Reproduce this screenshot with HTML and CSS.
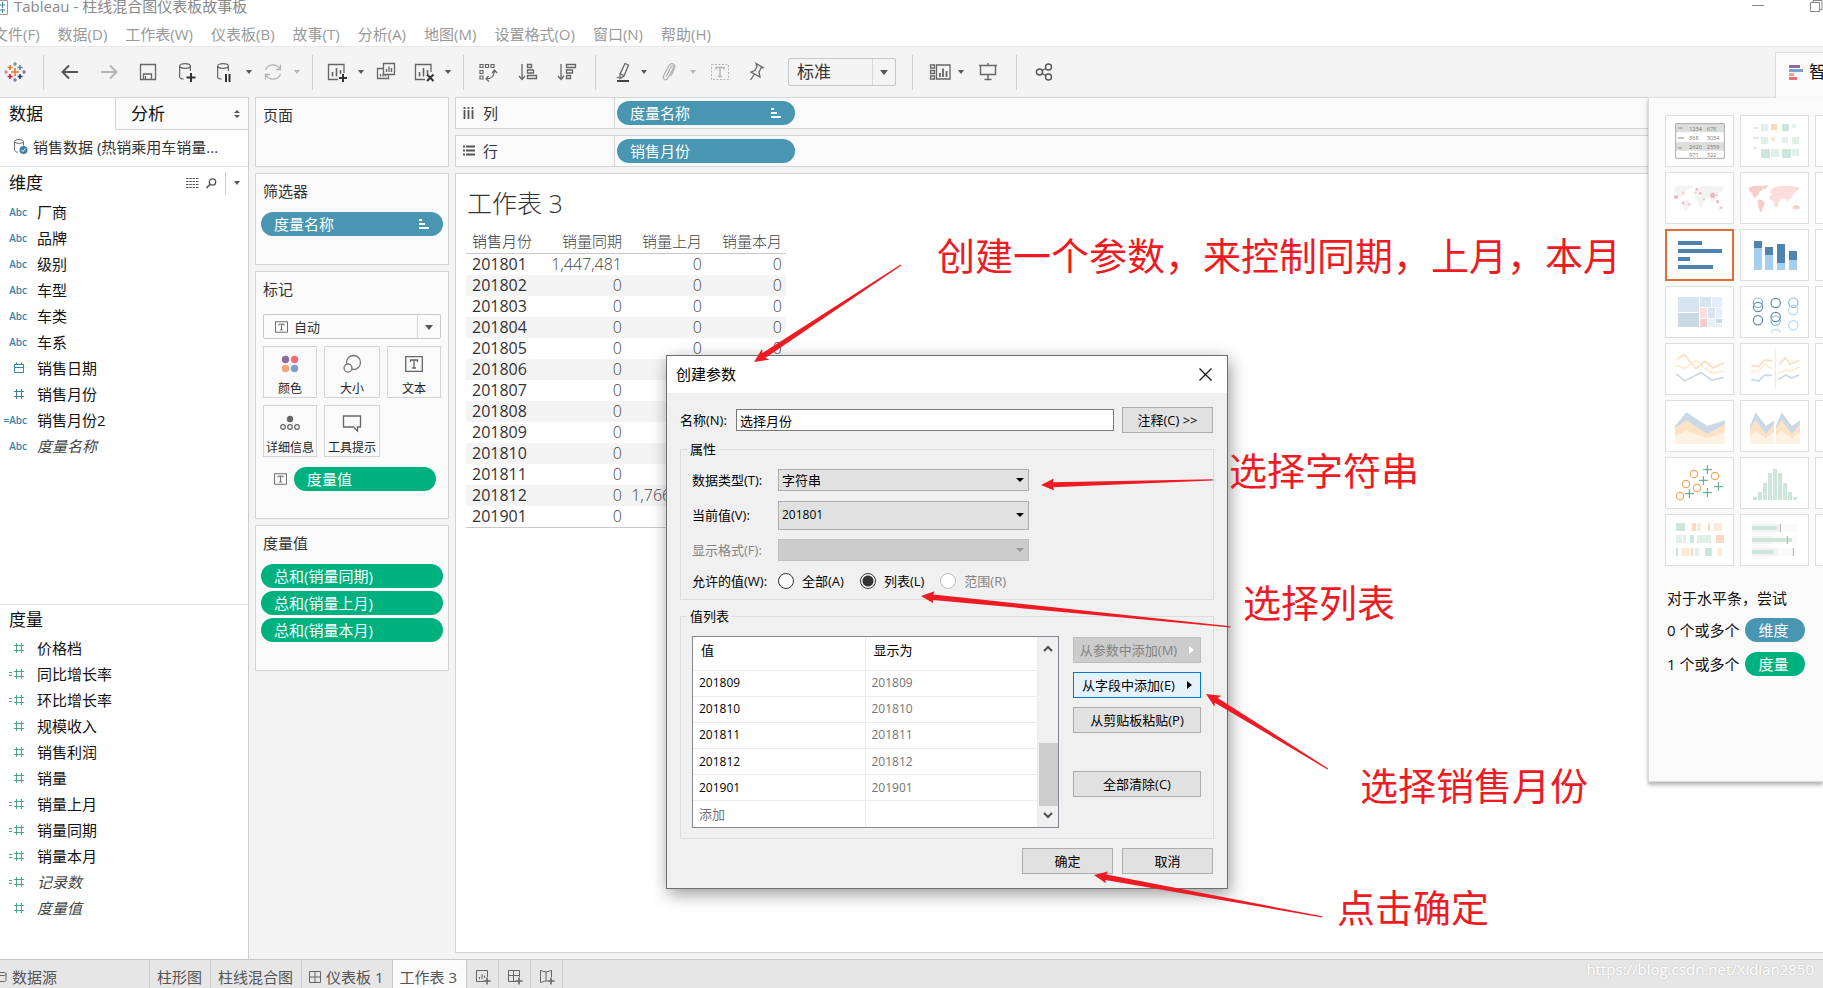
FILE: index.html
```html
<!DOCTYPE html>
<html lang="zh-CN">
<head>
<meta charset="utf-8">
<title>Tableau - 柱线混合图仪表板故事板</title>
<link rel="stylesheet" href="styles.css">
</head>
<body>
<svg class="defs" width="0" height="0" aria-hidden="true">
  <symbol id="hash" viewBox="0 0 12 12"><path d="M1 3.500h10M1 8.500h10M3.500 1v10M8.500 1v10" fill="none" stroke="currentColor"/></symbol>
  <symbol id="eqhash" viewBox="0 0 16 12"><path d="M0 4.500h3M0 7.500h3M5 3.500h10M5 8.500h10M7.500 1v10M12.500 1v10" fill="none" stroke="currentColor"/></symbol>
  <symbol id="cal" viewBox="0 0 12 12"><path d="M1.500 2.500h9v8h-9zM1.500 5.500h9M3.500 .5v2M8.500 .5v2" fill="none" stroke="currentColor"/></symbol>
  <symbol id="tbox" viewBox="0 0 18 16"><path d="M.7.7h16.600v14.600H.7zM5.500 6V4h7v2M9 4v8M7 12h4" fill="none" stroke="#666" stroke-width="1.300"/></symbol>
  <symbol id="sorted" viewBox="0 0 10 10"><path d="M0 0h3v2H0zM0 4h6v2H0zM0 8h10v2H0z" fill="#fff"/></symbol>
  <symbol id="cyl" viewBox="0 0 12 17"><path d="M.6 3v10.500c0 1.500 2 2.500 4 2.500M11.400 3v5" fill="none" stroke="currentColor" stroke-width="1.200"/><ellipse cx="6" cy="3" rx="5.400" ry="2.300" fill="none" stroke="currentColor" stroke-width="1.200"/></symbol>
</svg>

<header class="titlebar">
  <svg class="app-icon" viewBox="0 0 12 20"><path d="M0 .5h7.500v14H0" fill="#fff" stroke="#999"/><path d="M0 5h5M2.500 2v6M0 10h5M2.500 9v4" stroke="#3b82a8"/></svg>
  <span class="title-text">Tableau - 柱线混合图仪表板故事板</span>
  <svg class="win-btns" viewBox="0 0 72 14"><path d="M1 5.500h12M59.500 2.500h9v9h-9zM62 2.500v-2h9v9h-2" fill="none" stroke="#888"/></svg>
</header>
<nav class="menubar">
  <a href="#">文件(F)</a><a href="#">数据(D)</a><a href="#">工作表(W)</a><a href="#">仪表板(B)</a><a href="#">故事(T)</a><a href="#">分析(A)</a><a href="#">地图(M)</a><a href="#">设置格式(O)</a><a href="#">窗口(N)</a><a href="#">帮助(H)</a>
</nav>

<div class="toolbar">
  <button class="tb" aria-label="开始"><svg viewBox="0 0 24 24" fill="none" stroke-width="1.600"><path d="M12 8v8M8 12h8" stroke="#e8762c"/><path d="M7 5v5M4.500 7.500h5" stroke="#e8762c"/><path d="M17 5v5M14.500 7.500h5" stroke="#5b879b"/><path d="M7 14v5M4.500 16.500h5" stroke="#c72037"/><path d="M17 14v5M14.500 16.500h5" stroke="#1f447e"/><path d="M12 2v4M10 4h4" stroke="#5b879b" stroke-width="1.200"/><path d="M12 18v4M10 20h4M19 12h4M21 10v4" stroke="#6d6a9c" stroke-width="1.200"/><path d="M1 12h4M3 10v4" stroke="#c77" stroke-width="1.200"/></svg></button>
  <i class="sep m16"></i>
  <button class="tb m14" aria-label="撤消"><svg viewBox="0 0 24 24"><path d="M20 12H5M11 5.500L4.500 12l6.500 6.500" fill="none" stroke="#555" stroke-width="2"/></svg></button>
  <button class="tb m15" aria-label="重做"><svg viewBox="0 0 24 24"><path d="M4 12h15M13 5.500l6.500 6.500-6.500 6.500" fill="none" stroke="#b4b4b4" stroke-width="2"/></svg></button>
  <button class="tb m15" aria-label="保存"><svg viewBox="0 0 24 24"><path d="M4.500 4.500h15v15h-15zM7.500 19v-5h8v5M9.500 16v3" fill="none" stroke="#666" stroke-width="1.300"/></svg></button>
  <button class="tb m15" aria-label="新建数据源"><svg viewBox="0 0 24 24" color="#666"><use href="#cyl" x="4" y="3" width="12" height="17"/><path d="M16 13v9M11.500 17.500h9" stroke="#333" stroke-width="2"/></svg></button>
  <button class="tb m14" aria-label="暂停"><svg viewBox="0 0 24 24" color="#666"><use href="#cyl" x="4" y="3" width="12" height="17"/><path d="M13 14v8M16.500 14v8" stroke="#333" stroke-width="2"/></svg></button>
  <i class="caret m7"></i>
  <button class="tb m7" aria-label="刷新"><svg viewBox="0 0 24 24"><path d="M4.500 10A8 8 0 0 1 19 9M19.500 14A8 8 0 0 1 5 15M19.500 4.500V9.500H15M4.500 19.500V14.500H9" fill="none" stroke="#b4b4b4" stroke-width="1.300"/></svg></button>
  <i class="caret dim m7"></i>
  <i class="sep m10"></i>
  <button class="tb m12" aria-label="新建工作表"><svg viewBox="0 0 24 24"><path d="M13 19.500H3.500v-15h15.500V13" fill="none" stroke="#666" stroke-width="1.300"/><path d="M7.500 12v4.500M11.500 8v8.500M15.500 10v4" stroke="#666" stroke-width="1.600"/><path d="M18 14v8M14 18h8" stroke="#333" stroke-width="2"/></svg></button>
  <i class="caret m7"></i>
  <button class="tb m8" aria-label="复制"><svg viewBox="0 0 24 24"><path d="M9.500 3.500h11v11h-11zM9 8.500H3.500v10h11v-4M12.500 9v3M15 6.500v5.500M17.500 8v4M6.500 14v2.500M9 14v2.500M11.500 15v1.500" fill="none" stroke="#666" stroke-width="1.300"/></svg></button>
  <button class="tb m14" aria-label="清除"><svg viewBox="0 0 24 24"><path d="M13 19.500H3.500v-15h15.500V12" fill="none" stroke="#666" stroke-width="1.300"/><path d="M7.500 12v4.500M11.500 8v8.500M15.500 10v4" stroke="#666" stroke-width="1.600"/><path d="M15 14.500l6.500 6.500M21.500 14.500L15 21" stroke="#333" stroke-width="2"/></svg></button>
  <i class="caret m7"></i>
  <i class="sep m10"></i>
  <button class="tb m12" aria-label="交换"><svg viewBox="0 0 24 24" fill="none" stroke="#666" stroke-width="1.200"><path d="M4 4.500h3v3H4zM9.500 4.500h3v3h-3zM15 4.500h3v3h-3zM4 10.500h3v3H4zM4 16h3v3H4zM10 19c5 0 8-3 8.500-8M16 13l2.500-3 2.500 3M12.500 16L10 19l3 2.500"/></svg></button>
  <button class="tb m16" aria-label="升序"><svg viewBox="0 0 24 24" fill="none" stroke="#666" stroke-width="1.300"><path d="M6 4v15M3 16l3 3.500L9 16M11.500 4.500h4v3h-4zM11.500 10h6v3h-6zM11.500 15.500h9v3h-9z"/></svg></button>
  <button class="tb m15" aria-label="降序"><svg viewBox="0 0 24 24" fill="none" stroke="#666" stroke-width="1.300"><path d="M6 4v15M3 16l3 3.500L9 16M11.500 4.500h9v3h-9zM11.500 10h6v3h-6zM11.500 15.500h4v3h-4z"/></svg></button>
  <i class="sep m16"></i>
  <button class="tb m15" aria-label="突出显示"><svg viewBox="0 0 24 24"><path d="M14 3.500l3.500 1.500-4.500 11-4 2.500v-4.500zM9 13.500l3.500 2M6 18l2-1" fill="none" stroke="#666" stroke-width="1.300"/><path d="M6 21h12" stroke="#444" stroke-width="2"/></svg></button>
  <i class="caret m4"></i>
  <button class="tb m8" aria-label="组"><svg viewBox="0 0 24 24"><path d="M9 17l5-10c1-2 3-1 2.500 1L11 18c-1.500 3-5.500 2-4.500-2L12 5.500c2-3.500 7-1.500 5.500 2.500L14 16" fill="none" stroke="#b4b4b4" stroke-width="1.300"/></svg></button>
  <i class="caret dim m7"></i>
  <button class="tb m10" aria-label="标签"><svg viewBox="0 0 24 24" fill="none" stroke="#b4b4b4"><path d="M3.500 4.500h17v15h-17z" stroke-dasharray="2 1.500"/><path d="M8 9.500V7.500h8v2M12 7.500v9M10 16.500h4" stroke-width="1.400"/></svg></button>
  <button class="tb m12" aria-label="固定"><svg viewBox="0 0 24 24" fill="none" stroke="#666" stroke-width="1.300"><path d="M12 3.500l7 4-2 .5-2 4 1 5-9-5 4-1.500 2-4zM10.500 14L6.500 20"/></svg></button>
  <span class="pick fit m20"><select aria-label="适合"><option>标准</option></select></span>
  <i class="sep m16"></i>
  <button class="tb m15" aria-label="显示卡"><svg viewBox="0 0 24 24" fill="none" stroke="#666" stroke-width="1.300"><path d="M2.500 5h4v3h-4zM2.500 10.500h4v3h-4zM2.500 16h4v3h-4zM8.500 5h13.500v14H8.500z"/><path d="M12 13v4M15 8.500v8.500M18.500 11v6" stroke-width="1.800"/></svg></button>
  <i class="caret m4"></i>
  <button class="tb m10" aria-label="演示"><svg viewBox="0 0 24 24" fill="none" stroke="#666" stroke-width="1.400"><path d="M3 5.500h18M4.500 5.500v9h15v-9M12 3v2M12 15v4.500M8.500 19.500h7"/></svg></button>
  <i class="sep m16"></i>
  <button class="tb m15" aria-label="共享"><svg viewBox="0 0 24 24" fill="none" stroke="#555" stroke-width="1.400"><circle cx="7.500" cy="12" r="3"/><circle cx="16.500" cy="7" r="3"/><circle cx="16.500" cy="17" r="3"/><path d="M10 10.500l3.800-2M10 13.500l3.800 2"/></svg></button>
  <button class="showme-tab"><svg viewBox="0 0 14 15"><path d="M0 0h11v3H0z" fill="#8a6d9e"/><path d="M0 4h14v3H0z" fill="#7ba0cc"/><path d="M0 8h5v3H0z" fill="#f5a479"/><path d="M0 12h8v3H0z" fill="#f56b7c"/></svg>智能显示</button>
</div>

<main class="main">
  <aside class="data-pane">
    <div class="tabs"><button class="tab on">数据</button><button class="tab">分析<svg viewBox="0 0 6 8"><path d="M3 0l3 3H0zM3 8L0 5h6z" fill="#555"/></svg></button></div>
    <div class="source"><svg viewBox="0 0 16 18" color="#666"><use href="#cyl" x="1" y="1" width="10" height="14"/><circle cx="10.500" cy="12" r="4" fill="#3b82a8"/><path d="M8.500 12l1.500 1.500 2.500-3" fill="none" stroke="#fff"/></svg>销售数据 (热销乘用车销量...</div>
    <section class="fields dims">
      <div class="fields-head"><h2>维度</h2>
        <svg class="i-grid" viewBox="0 0 13 10"><path d="M0 .5h13M0 3.500h13M0 6.500h13M0 9.500h13" stroke="#555" stroke-dasharray="2.500 .8"/></svg>
        <svg class="i-find" viewBox="0 0 11 11"><circle cx="6.500" cy="4" r="3.200" fill="none" stroke="#555" stroke-width="1.300"/><path d="M4 6.500L.5 10" stroke="#555" stroke-width="1.600"/></svg>
        <i class="vline"></i><i class="caret"></i></div>
      <ul>
        <li><b>Abc</b>厂商</li><li><b>Abc</b>品牌</li><li><b>Abc</b>级别</li><li><b>Abc</b>车型</li><li><b>Abc</b>车类</li><li><b>Abc</b>车系</li>
        <li><b><svg class="i12"><use href="#cal"/></svg></b>销售日期</li>
        <li><b><svg class="i12"><use href="#hash"/></svg></b>销售月份</li>
        <li><b>=Abc</b>销售月份2</li>
        <li class="gen"><b>Abc</b><em>度量名称</em></li>
      </ul>
    </section>
    <section class="fields meas">
      <div class="fields-head"><h2>度量</h2></div>
      <ul>
        <li><b><svg class="i12"><use href="#hash"/></svg></b>价格档</li>
        <li><b><svg class="i16"><use href="#eqhash"/></svg></b>同比增长率</li>
        <li><b><svg class="i16"><use href="#eqhash"/></svg></b>环比增长率</li>
        <li><b><svg class="i12"><use href="#hash"/></svg></b>规模收入</li>
        <li><b><svg class="i12"><use href="#hash"/></svg></b>销售利润</li>
        <li><b><svg class="i12"><use href="#hash"/></svg></b>销量</li>
        <li><b><svg class="i16"><use href="#eqhash"/></svg></b>销量上月</li>
        <li><b><svg class="i16"><use href="#eqhash"/></svg></b>销量同期</li>
        <li><b><svg class="i16"><use href="#eqhash"/></svg></b>销量本月</li>
        <li class="gen"><b><svg class="i16"><use href="#eqhash"/></svg></b><em>记录数</em></li>
        <li class="gen"><b><svg class="i12"><use href="#hash"/></svg></b><em>度量值</em></li>
      </ul>
    </section>
  </aside>

  <div class="cards">
    <section class="card pages"><h3>页面</h3></section>
    <section class="card filters"><h3>筛选器</h3><div class="pill blue">度量名称<svg><use href="#sorted"/></svg></div></section>
    <section class="card marks"><h3>标记</h3>
      <span class="pick mark-type"><svg><use href="#tbox"/></svg><select aria-label="标记类型"><option>自动</option></select></span>
      <div class="mark-grid">
        <button><svg viewBox="0 0 20 20"><circle cx="5.500" cy="5.500" r="3.700" fill="#8a6d9e"/><circle cx="14.500" cy="5.500" r="3.700" fill="#f56b7c"/><circle cx="5.500" cy="14.500" r="3.700" fill="#f5a479"/><circle cx="14.500" cy="14.500" r="3.700" fill="#7ba0cc"/></svg>颜色</button>
        <button><svg viewBox="0 0 20 20" fill="#fafafa" stroke="#777" stroke-width="1.300"><circle cx="11.500" cy="8.500" r="7"/><circle cx="6" cy="14" r="4"/></svg>大小</button>
        <button><svg viewBox="0 0 20 20"><use href="#tbox" x="1" y="2" width="18" height="16"/></svg>文本</button>
        <button><svg viewBox="0 0 20 20" fill="none" stroke="#666" stroke-width="1.200"><circle cx="10" cy="6" r="2.600" fill="#666"/><circle cx="3" cy="14" r="2.300"/><circle cx="10" cy="14" r="2.300"/><circle cx="17" cy="14" r="2.300"/></svg>详细信息</button>
        <button><svg viewBox="0 0 20 20"><path d="M1.500 3h17v11h-3v4l-4-4h-10z" fill="none" stroke="#666" stroke-width="1.300"/></svg>工具提示</button>
      </div>
      <div class="mark-row"><svg><use href="#tbox"/></svg><div class="pill green">度量值</div></div>
    </section>
    <section class="card values"><h3>度量值</h3><div class="pill green">总和(销量同期)</div><div class="pill green">总和(销量上月)</div><div class="pill green">总和(销量本月)</div></section>
  </div>

  <div class="work">
    <div class="shelf"><span class="shelf-name"><svg viewBox="0 0 12 12"><path d="M1.500 0v2M1.500 3v9M5.500 0v2M5.500 3v9M9.500 0v2M9.500 3v9" stroke="#555" stroke-width="1.800"/></svg>列</span><div class="pill blue">度量名称<svg><use href="#sorted"/></svg></div></div>
    <div class="shelf"><span class="shelf-name"><svg viewBox="0 0 12 12"><path d="M0 1.500h2M3 1.500h9M0 5.500h2M3 5.500h9M0 9.500h2M3 9.500h9" stroke="#555" stroke-width="1.800"/></svg>行</span><div class="pill blue">销售月份</div></div>
    <section class="sheet">
      <h1>工作表 3</h1>
      <table class="viz">
        <thead><tr><th>销售月份</th><th>销量同期</th><th>销量上月</th><th>销量本月</th></tr></thead>
        <tbody>
          <tr><th>201801</th><td>1,447,481</td><td>0</td><td>0</td></tr>
          <tr><th>201802</th><td>0</td><td>0</td><td>0</td></tr>
          <tr><th>201803</th><td>0</td><td>0</td><td>0</td></tr>
          <tr><th>201804</th><td>0</td><td>0</td><td>0</td></tr>
          <tr><th>201805</th><td>0</td><td>0</td><td>0</td></tr>
          <tr><th>201806</th><td>0</td><td></td><td></td></tr>
          <tr><th>201807</th><td>0</td><td></td><td></td></tr>
          <tr><th>201808</th><td>0</td><td></td><td></td></tr>
          <tr><th>201809</th><td>0</td><td></td><td></td></tr>
          <tr><th>201810</th><td>0</td><td></td><td></td></tr>
          <tr><th>201811</th><td>0</td><td></td><td></td></tr>
          <tr><th>201812</th><td>0</td><td>1,766,000</td><td></td></tr>
          <tr><th>201901</th><td>0</td><td></td><td></td></tr>
        </tbody>
      </table>
    </section>
  </div>

  <aside class="showme">
    <div class="thumbs">
      <button aria-label="文本表"><svg viewBox="78 78 201 150"><path d="M107 101h146v104H107z" fill="#fff"/><path d="M107 101h146v26H107zM107 156h146v26H107z" fill="#dedede"/><path d="M107 101h146v104H107z" fill="none" stroke="#aaa" stroke-width="3"/><path d="M114 114h15M114 144h18M114 174h12" stroke="#aaa" stroke-width="5"/><g font-size="17" fill="#777"><text x="147" y="122">1234</text><text x="200" y="122">678</text><text x="147" y="149">368</text><text x="200" y="149">3034</text><text x="147" y="176">2620</text><text x="200" y="176">2559</text><text x="147" y="200">971</text><text x="200" y="200">322</text></g></svg></button>
      <button aria-label="热图"><svg viewBox="303 78 201 150"><path d="M339 111h15v6h-15zM339 141h18v6h-18zM339 171h12v6h-12z" fill="#e8e8e8"/><path d="M363 102h21v21h-21zM456 102h12v12h-12zM363 141h21v21h-21zM426 141h18v18h-18zM456 141h21v21h-21zM393 177h24v24h-24zM456 177h21v21h-21z" fill="#e0f1e8"/><path d="M426 102h21v21h-21zM363 177h27v27h-27zM426 177h27v27h-27z" fill="#cce6da"/><path d="M393 102h18v18h-18z" fill="#fbd9ba"/><path d="M393 141h12v12h-12z" fill="#fde7d0"/></svg></button>
      <button></button>
      <button aria-label="符号地图"><svg viewBox="78 249 201 150"><g fill="#f3f3f3"><path d="M102 292l14-4 20-1 10 4-3 9-9 4-5 12-8 4 5 8-9-6-7-12-8-8zM128 328l14 3 8 8-6 14-6 15-5-8-4-18zM142 287l18-1-5 9-8 3zM164 316l14-3 14 8 6 4-7 14-5 13-8-2-3-16-10-6zM165 309l2-10 13-9 24-3 30 2 20 3-6 10-12 7-6 14-8 6-5 8-7-12-10 1-7-6-10 4-8-8zM233 350l10-6 9 7-3 9-15-2z"/></g><g fill="#eab9bf"><circle cx="108" cy="321" r="6"/><circle cx="218" cy="316" r="8"/><circle cx="233" cy="335" r="5"/><circle cx="181" cy="310" r="4"/><circle cx="129" cy="339" r="4"/><circle cx="243" cy="353" r="3"/><circle cx="170" cy="298" r="4"/><circle cx="192" cy="328" r="3"/></g><g fill="#fad3d3"><circle cx="130" cy="310" r="5"/><circle cx="147" cy="343" r="5"/><circle cx="166" cy="308" r="4"/><circle cx="231" cy="315" r="4"/></g></svg></button>
      <button aria-label="填充地图"><svg viewBox="303 249 201 150"><g fill="#f7cdc9"><path d="M327 292l14-4 20-1 10 4-3 9-9 4-5 12-8 4 5 8-9-6-7-12-8-8zM353 328l14 3 8 8-6 14-6 15-5-8-4-18zM367 287l18-1-5 9-8 3zM458 350l10-6 12 7-3 7-18-2z"/></g><path d="M389 316l14-3 14 8 6 4-7 14-5 13-8-2-3-16-10-6zM390 309l2-10 13-9 24-3 30 2 20 3-6 10-12 7-6 14-8 6-5 8-7-12-10 1-7-6-10 4-8-8z" fill="#fddedd"/></svg></button>
      <button></button>
      <button class="sel" aria-label="水平条"><svg viewBox="81 423 195 144"><path d="M114 453h72v12h-72zM114 477h132v12H114zM114 501h36v12h-36zM114 525h105v12H114z" fill="#4e84ae"/></svg></button>
      <button aria-label="堆叠条"><svg viewBox="303 420 201 150"><path d="M342 474h24v66h-24zM375 495h24v45h-24zM411 519h24v21h-24zM447 510h24v30h-24z" fill="#a5cff0"/><path d="M342 453h24v21h-24zM375 471h24v24h-24zM411 462h24v57h-24zM447 483h24v27h-24z" fill="#4e84ae"/></svg></button>
      <button></button>
      <button aria-label="树状图"><svg viewBox="78 591 201 150"><path d="M114 621h63v45h-63zM180 621h33v30h-33zM204 654h21v30h-21z" fill="#d7e5f1"/><path d="M114 669h63v42h-63zM228 687h18v12h-18z" fill="#cbd8e6"/><path d="M216 621h30v30h-30zM228 654h18v30h-18zM204 687h21v24h-21zM228 702h18v9h-18z" fill="#e3f0fb"/><path d="M180 654h21v30h-21z" fill="#fddedd"/><path d="M180 687h21v24h-21z" fill="#f7cdc9"/></svg></button>
      <button aria-label="圆视图"><svg viewBox="303 591 201 150" fill="none" stroke-width="3.500"><g stroke="#5b8db5"><circle cx="354" cy="651" r="14"/><circle cx="354" cy="691" r="14"/><circle cx="407" cy="639" r="14"/><circle cx="407" cy="681" r="14"/></g><g stroke="#88b5d6"><circle cx="354" cy="638" r="14"/><circle cx="407" cy="692" r="14"/><circle cx="460" cy="638" r="14"/></g><g stroke="#b4d6f0"><circle cx="460" cy="660" r="14"/><circle cx="460" cy="706" r="14"/><path d="M394 728a14 14 0 0 1 27 0"/></g></svg></button>
      <button></button>
      <button aria-label="线"><svg viewBox="78 762 201 150" fill="none" stroke-width="5"><path d="M111 809l21-16 36 43 27-23 24 21 33-16" stroke="#fddcbe"/><path d="M109 827l26 8 33-24 22 21 28 17 33-6" stroke="#fdeccd"/><path d="M109 851l24 22 50-25 32 22 36-7" stroke="#cbd8e6"/></svg></button>
      <button aria-label="双线"><svg viewBox="303 762 201 150" fill="none" stroke-width="5"><path d="M334 826l22 4 16-20 24 2M417 824l19-21 16 20 25-12" stroke="#fddcbe"/><path d="M334 845l22-2 18-21 22 14M414 850l24-10 17 3 23-12" stroke="#fdeccd"/><path d="M334 868l22 5 17-17h23M415 869l22-14 17 9 23-9" stroke="#cbd8e6"/><path d="M406 777v120" stroke="#e8e8e8" stroke-width="3"/></svg></button>
      <button></button>
      <button aria-label="面积"><svg viewBox="78 63 201 150"><path d="M105 138l34-41 63 41 53-17v71H105z" fill="#cbd8e6"/><path d="M105 144l34-23 63 41 53-30v60H105z" fill="#fde3c6"/><path d="M105 168l34-15 63 22 53-19v36H105z" fill="#fef3e3"/></svg></button>
      <button aria-label="双面积"><svg viewBox="303 63 201 150"><path d="M330 138l17-41 31 41 24-17v71h-72zM408 138l17-41 31 41 24-17v71h-72z" fill="#cbd8e6"/><path d="M330 144l17-23 31 41 24-30v60h-72zM408 144l17-23 31 41 24-30v60h-72z" fill="#fde3c6"/><path d="M330 168l17-15 31 22 24-19v36h-72zM408 168l17-15 31 22 24-19v36h-72z" fill="#fef3e3"/></svg></button>
      <button></button>
      <button aria-label="散点图"><svg viewBox="78 234 201 150" fill="none" stroke-width="3.500"><g stroke="#f2a856"><circle cx="162" cy="282" r="11"/><circle cx="225" cy="288" r="11"/><circle cx="138" cy="312" r="11"/><circle cx="171" cy="324" r="11"/><circle cx="120" cy="348" r="11"/></g><path d="M189 269h27M202 255v27M177 301h27M190 288v27M222 320h27M235 306v27M135 341h27M148 328v27M189 338h27M202 324v27" stroke="#4da585" stroke-width="3"/></svg></button>
      <button aria-label="直方图"><svg viewBox="303 234 201 150"><path d="M339 351h12v9h-12zM354 336h12v24h-12zM369 309h12v51h-12zM384 279h12v81h-12zM399 267h12v93h-12zM414 279h12v81h-12zM429 309h12v51h-12zM444 336h12v24h-12zM459 351h12v9h-12z" fill="#cce6da"/></svg></button>
      <button></button>
      <button aria-label="甘特图"><svg viewBox="78 405 201 150"><path d="M108 429h27v24h-27zM150 465h12v24h-12zM108 504h6v24h-6zM195 504h21v24h-21z" fill="#cce6da"/><path d="M108 465h18v24h-18zM129 465h9v24h-9zM171 465h42v24h-42zM165 504h12v24h-12z" fill="#e0f1e8"/><path d="M156 429h12v24h-12zM204 429h6v24h-6zM228 465h24v24h-24zM153 504h6v24h-6z" fill="#fbd9c0"/><path d="M171 429h12v24h-12zM222 429h24v24h-24zM123 504h24v24h-24zM234 504h12v24h-12z" fill="#fdebd8"/></svg></button>
      <button aria-label="标靶图"><svg viewBox="303 405 201 150"><path d="M336 432h135v24H336zM336 468h135v24H336zM336 504h135v24H336z" fill="#fafafa"/><path d="M336 432h84v24h-84zM336 468h60v24h-60zM336 504h75v24h-75z" fill="#f3f3f3"/><path d="M336 438h75v12h-75zM336 474h120v12H336zM336 510h63v12h-63z" fill="#cce6da"/><path d="M421 432v24M442 468v24M460 504v24" stroke="#b0b0b0" stroke-width="3"/></svg></button>
      <button></button>
    </div>
    <p>对于水平条，尝试</p>
    <p>0 个或多个<span class="pill blue">维度</span></p>
    <p>1 个或多个<span class="pill green">度量</span></p>
  </aside>

  <section class="dialog" role="dialog" aria-label="创建参数">
    <div class="dlg-title"><span>创建参数</span><button aria-label="关闭"><svg viewBox="0 0 13 13"><path d="M.5.5l12 12M12.500.5l-12 12" stroke="#111" stroke-width="1.200"/></svg></button></div>
    <form class="dlg-body">
      <div class="name-row"><label for="pname">名称(N):</label><input id="pname" type="text" value="选择月份"><button type="button" class="btn">注释(C) &gt;&gt;</button></div>
      <fieldset class="props">
        <legend>属性</legend>
        <label for="dtype">数据类型(T):</label><span class="drop"><select id="dtype"><option>字符串</option></select></span>
        <label for="cur">当前值(V):</label><span class="drop tall"><select id="cur"><option>201801</option></select></span>
        <label for="fmt" class="off">显示格式(F):</label><span class="drop off"><select id="fmt" disabled><option></option></select></span>
        <span>允许的值(W):</span>
        <div class="radios"><label><input type="radio" name="allow">全部(A)</label><label><input type="radio" name="allow" checked>列表(L)</label><label class="off"><input type="radio" name="allow" disabled>范围(R)</label></div>
      </fieldset>
      <fieldset class="vals">
        <legend>值列表</legend>
        <div class="listbox">
          <table>
            <thead><tr><th>值</th><th>显示为</th></tr></thead>
            <tbody><tr><td>201809</td><td>201809</td></tr><tr><td>201810</td><td>201810</td></tr><tr><td>201811</td><td>201811</td></tr><tr><td>201812</td><td>201812</td></tr><tr><td>201901</td><td>201901</td></tr><tr class="add"><td>添加</td><td></td></tr></tbody>
          </table>
          <div class="scroll"><svg viewBox="0 0 10 7"><path d="M1 6l4-4 4 4" fill="none" stroke="#505050" stroke-width="2"/></svg><i></i><svg viewBox="0 0 10 7"><path d="M1 1l4 4 4-4" fill="none" stroke="#505050" stroke-width="2"/></svg></div>
        </div>
        <div class="side">
          <button type="button" class="btn" disabled>从参数中添加(M)<i></i></button>
          <button type="button" class="btn hot">从字段中添加(E)<i></i></button>
          <button type="button" class="btn">从剪贴板粘贴(P)</button>
          <button type="button" class="btn clear">全部清除(C)</button>
        </div>
      </fieldset>
      <div class="dlg-foot"><button type="button" class="btn">确定</button><button type="button" class="btn">取消</button></div>
    </form>
  </section>
</main>

<footer class="sheets">
  <button class="src"><svg class="cut" viewBox="0 0 12 12"><path d="M0 1.500h4.500c1 0 1.500.5 1.500 1.500v6c0 1-.5 1.500-1.500 1.500H0M0 4.500h3c1.500 0 3-.5 3-1.500" fill="none" stroke="#666"/></svg>数据源</button>
  <button>柱形图</button><button>柱线混合图</button>
  <button><svg class="i12" viewBox="0 0 12 12"><path d="M.5.5h11v11H.5zM6 .5v11M.5 6h11" fill="none" stroke="#666"/></svg>仪表板 1</button>
  <button class="on">工作表 3</button>
  <button class="new" aria-label="新建工作表"><svg viewBox="0 0 16 16" fill="none" stroke="#666"><path d="M9 12.500H1.500v-11h11V8M4.500 8v2M7 5v5M9.500 6.500V9"/><path d="M12 8.500v7M8.500 12h7" stroke-width="1.600"/></svg></button>
  <button class="new" aria-label="新建仪表板"><svg viewBox="0 0 16 16" fill="none" stroke="#666"><path d="M9 12.500H1.500v-11h11V8M6.500 1.500v11M1.500 6.500h11"/><path d="M12 8.500v7M8.500 12h7" stroke-width="1.600"/></svg></button>
  <button class="new" aria-label="新建故事"><svg viewBox="0 0 16 16" fill="none" stroke="#666"><path d="M8.500 12H6.500L1.500 13.500V1.500L7 3l5.500-1.500V8M7 3v9"/><path d="M12 8.500v7M8.500 12h7" stroke-width="1.600"/></svg></button>
  <span class="mark">https://blog.csdn.net/Xidian2850</span>
</footer>

<div class="notes">
  <svg width="1823" height="988" fill="#ed1c24">
    <path transform="translate(754 362) rotate(-33.400)" d="M0 0L14-6.500L12-2.800L176-.6V.6L12 2.800L14 6.500Z"/>
    <path transform="translate(1041 485) rotate(-1.700)" d="M0 0L13-6L12-2.500L172-.6V.6L12 2.500L13 6Z"/>
    <path transform="translate(921 596) rotate(5.700)" d="M0 0L13-6L12-2.800L311-.6V.6L12 2.800L13 6Z"/>
    <path transform="translate(1206 694) rotate(31.600)" d="M0 0L14-6.500L12-2.800L143-.6V.6L12 2.800L14 6.500Z"/>
    <path transform="translate(1094 875) rotate(10.400)" d="M0 0L13-6L12-2.800L232-.6V.6L12 2.800L13 6Z"/>
  </svg>
  <p class="n1">创建一个参数，来控制同期，上月，本月</p>
  <p class="n2">选择字符串</p>
  <p class="n3">选择列表</p>
  <p class="n4">选择销售月份</p>
  <p class="n5">点击确定</p>
</div>
</body>
</html>
```
FILE: styles.css
```css
* { box-sizing: border-box; }
body {
  margin: 0; height: 100vh; overflow: hidden; position: relative;
  display: flex; flex-direction: column;
  background: #fff; color: #333;
  font: 15px/20px "Open Sans", "Noto Sans CJK SC", sans-serif;
}
button, select, input { font: inherit; color: inherit; margin: 0; }
button { background: none; border: 0; padding: 0; }
h1, h2, h3, p, ul { margin: 0; padding: 0; font-weight: 400; }
ul { list-style: none; }
svg { display: block; flex: none; }
.defs { position: absolute; }
.i12 { width: 12px; height: 12px; }
.i16 { width: 16px; height: 12px; }

.titlebar { display: flex; height: 20px; color: #888; }
.app-icon { width: 12px; height: 20px; }
.title-text { margin-left: 2px; line-height: 12px; }
.win-btns { width: 72px; height: 14px; margin-left: auto; }
.menubar { display: flex; gap: 18px; height: 26px; padding-top: 4px; margin-left: -7px; }
.menubar a { color: #999; text-decoration: none; white-space: nowrap; }

.toolbar { display: flex; align-items: center; height: 51px; padding-left: 3px; background: #f4f4f4; border-top: 1px solid #e8e8e8; flex: none; }
.tb { width: 24px; height: 24px; flex: none; }
.tb svg { width: 24px; height: 24px; }
.sep { width: 1px; height: 35px; background: #d0d0d0; }
.caret { width: 10px; height: 4px; display: grid; place-items: center; }
.caret::before { content: ""; border: 3px solid transparent; border-top: 4px solid #555; border-bottom: 0; }
.caret.dim::before { border-top-color: #b4b4b4; }
.m4 { margin-left: 4px; } .m7 { margin-left: 7px; } .m8 { margin-left: 8px; }
.m10 { margin-left: 10px; } .m12 { margin-left: 12px; } .m14 { margin-left: 14px; }
.m15 { margin-left: 15px; } .m16 { margin-left: 16px; } .m20 { margin-left: 20px; }
.pick { position: relative; display: flex; align-items: center; border: 1px solid #c8c8c8; border-radius: 2px; }
.pick select { appearance: none; border: 0; background: none; flex: 1; height: 100%; padding: 0 24px 0 8px; outline: 0; }
.pick::before { content: ""; position: absolute; right: 22px; top: 0; bottom: 0; border-left: 1px solid #d8d8d8; }
.pick::after { content: ""; position: absolute; right: 7px; top: 50%; margin-top: -2px; border: 4px solid transparent; border-top: 5px solid #555; border-bottom: 0; }
.fit { width: 108px; height: 28px; font-size: 17px; }
.showme-tab { display: flex; align-items: center; gap: 6px; align-self: flex-end; width: 48px; height: 45px; margin-left: auto; padding: 0 0 6px 13px; overflow: hidden; white-space: nowrap; background: #fafafa; border: 1px solid #dcdcdc; border-width: 1px 0 0 1px; color: #111; font-size: 17px; position: relative; }
.showme-tab svg { width: 14px; height: 15px; }

.main { display: flex; flex: 1; min-height: 0; position: relative; background: #f4f4f4; }
.data-pane { width: 249px; flex: none; display: flex; flex-direction: column; background: #fff; border-right: 1px solid #d0d0d0; color: #111; }
.tabs { display: flex; height: 33px; flex: none; border-top: 1px solid #d4d4d4; font-size: 17px; }
.tab { display: flex; align-items: center; justify-content: space-between; flex: 1; padding: 0 8px 0 15px; background: #fafafa; border: 1px solid #d4d4d4; border-width: 0 0 1px 1px; }
.tab.on { flex: 0 0 115px; background: #fff; border: 0; padding: 0 9px; }
.tab svg { width: 6px; height: 8px; }
.source { display: flex; align-items: center; gap: 4px; height: 37px; flex: none; padding: 0 0 2px 13px; border-bottom: 1px solid #e0e0e0; white-space: nowrap; color: #333; }
.source svg { width: 16px; height: 18px; }
.fields-head { display: flex; align-items: center; height: 32px; padding-left: 9px; }
.fields-head h2 { font-size: 17px; flex: 1; }
.i-grid { width: 13px; height: 10px; }
.i-find { width: 11px; height: 11px; margin: 0 8px 0 7px; }
.vline { width: 1px; height: 22px; background: #ccc; }
.fields-head .caret { margin: 0 6px; }
.dims { flex: 1; }
.fields li { display: flex; align-items: center; height: 26px; }
.fields b { display: flex; align-items: center; justify-content: flex-end; width: 27px; margin-right: 10px; font-size: 10px; font-weight: 600; color: #3b82a8; }
.fields .i12 { margin-right: 2px; }
.meas { border-top: 1px solid #e0e0e0; height: 355px; }
.meas .fields-head { height: 30px; }
.meas b { color: #4da585; }
.gen { color: #444; }
.meas .i16 { margin-right: 2px; }

.cards { width: 206px; flex: none; display: flex; flex-direction: column; gap: 6px; padding: 0 6px; }
.card { border: 1px solid #d4d4d4; background: #fafafa; padding: 0 5px; }
.card h3 { font-size: 15px; line-height: 20px; padding: 7px 2px 9px; }
.pages { height: 70px; }
.filters { height: 92px; }
.marks { height: 248px; }
.values { height: 146px; }
.pill { display: flex; align-items: center; justify-content: space-between; height: 24px; padding: 0 14px 0 13px; border-radius: 12px; color: #fff; }
.pill svg { width: 10px; height: 10px; }
.blue { background: #4996b2; }
.green { background: #00b180; }
.filters .pill { margin-top: 2px; }
.values .pill { margin-bottom: 3px; }
.values h3 { padding-bottom: 11px; }
.mark-type { height: 25px; margin: 6px 2px 7px; font-size: 13px; }
.mark-type svg { width: 13px; height: 12px; margin-left: 11px; }
.mark-type select { padding-left: 6px; }
.mark-grid { display: grid; grid-template-columns: 54px 56px 54px; gap: 7px; margin-left: 2px; }
.mark-grid button { display: flex; flex-direction: column; align-items: center; justify-content: space-between; height: 52px; padding: 7px 0 0; border: 1px solid #d4d4d4; font-size: 12px; line-height: 16px; white-space: nowrap; color: #222; }
.mark-grid svg { width: 20px; height: 20px; }
.mark-row { display: flex; align-items: center; gap: 7px; padding: 10px 7px 0 13px; }
.mark-row svg { width: 13px; height: 12px; }
.mark-row .pill { flex: 1; }

.work { flex: 1; min-width: 0; display: flex; flex-direction: column; gap: 6px; padding-bottom: 6px; }
.shelf { display: flex; align-items: center; height: 32px; flex: none; background: #fafafa; border: 1px solid #d4d4d4; }
.shelf-name { display: flex; align-items: center; gap: 8px; width: 159px; height: 100%; padding-left: 7px; margin-right: 2px; border-right: 1px solid #d4d4d4; }
.shelf-name svg { width: 12px; height: 12px; }
.shelf .pill { width: 178px; }
.sheet { flex: 1; background: #fff; border: 1px solid #d4d4d4; border-right: 0; padding: 13px 0 0 10px; }
.sheet h1 { font-size: 25px; line-height: 32px; font-weight: 300; padding-left: 1px; }
.viz { border-collapse: collapse; table-layout: fixed; width: 320px; margin-top: 12px; border-bottom: 1px solid #c8c8c8; font-size: 16px; color: #444; }
.viz tr { height: 21px; }
.viz th, .viz td { padding: 0 4px 0 6px; line-height: 21px; text-align: right; font-weight: 400; }
.viz td { padding-left: 0; font-weight: 300; }
.viz th:first-child { text-align: left; color: #333; }
.viz thead th { font-size: 15px; font-weight: 300; padding-bottom: 1px; border-bottom: 1px solid #c8c8c8; }
.viz tbody tr:nth-child(even) { background: #f4f4f4; }

.showme { position: absolute; right: 0; top: 0; width: 175px; height: 685px; padding: 18px 0 0 16px; overflow: hidden; background: #fafafa; border: 1px solid #dcdcdc; border-width: 0 0 1px 1px; box-shadow: 0 3px 4px rgba(0,0,0,.3); color: #111; }
.showme::before { content: ""; position: absolute; left: 0; top: 0; width: 127px; border-top: 1px solid #dcdcdc; }
.thumbs { display: grid; grid-template-columns: repeat(3, 69px); grid-auto-rows: 52px; gap: 5px 6px; margin-bottom: 17px; }
.thumbs button { background: #fff; border: 1px solid #dedede; }
.thumbs svg { width: 100%; height: 100%; }
.thumbs .sel { border: 2px solid #e06c36; }
.showme p { display: flex; align-items: center; gap: 6px; height: 34px; padding-left: 2px; white-space: nowrap; }
.showme p:first-of-type { height: 30px; }
.showme .pill { width: 60px; }

.dialog { position: absolute; left: 666px; top: 258px; width: 562px; background: #f0f0f0; border: 1px solid #6e6e6e; box-shadow: 2px 5px 16px rgba(0,0,0,.4); color: #000; font-size: 13px; line-height: 18px; }
.dlg-title { display: flex; align-items: center; justify-content: space-between; height: 37px; padding: 0 15px 0 9px; background: #fff; font-size: 15px; }
.dlg-title span { padding-bottom: 2px; }
.dlg-title svg { width: 13px; height: 13px; }
.dlg-body { padding: 14px 13px; }
.name-row { display: flex; align-items: center; margin: 0 1px 7px 0; }
.name-row label { width: 56px; }
.name-row input { flex: 1; min-width: 0; height: 22px; padding: 0 3px; margin-right: 8px; border: 1px solid #7a7a7a; background: #fff; }
.btn { width: 91px; height: 26px; background: #e1e1e1; border: 1px solid #adadad; white-space: nowrap; }
fieldset { margin: 0 0 7px; border: 1px solid #dcdcdc; }
legend { padding: 0 3px; margin-left: -5px; }
.props { display: grid; grid-template-columns: 86px 251px; align-items: center; row-gap: 9px; height: 160px; padding: 11px 12px 8px 11px; }
.drop { position: relative; display: block; height: 22px; }
.drop.tall { height: 29px; }
.drop select { display: block; width: 100%; height: 100%; appearance: none; border: 1px solid #adadad; border-radius: 0; background: #e1e1e1; padding: 0 3px; opacity: 1; }
.drop.tall select { font-size: 12px; }
.drop::after { content: ""; position: absolute; right: 5px; top: 50%; margin-top: -2px; border: 4px solid transparent; border-top-color: #000; border-bottom: 0; }
.drop.off select { background: #ccc; border-color: #bfbfbf; }
.drop.off::after { border-top-color: #999; }
.off { color: #838383; }
.radios { display: flex; gap: 16px; height: 20px; white-space: nowrap; }
.radios label { display: flex; align-items: center; gap: 8px; }
.radios input { appearance: none; width: 16px; height: 16px; border: 1px solid #333; border-radius: 50%; background: #fff; }
.radios input:checked { background: radial-gradient(circle, #333 5px, #fff 6px); }
.radios input:disabled { border-color: #bbb; }
.vals { display: flex; gap: 14px; height: 232px; padding: 11px 12px 10px 11px; margin-bottom: 9px; }
.listbox { display: flex; width: 367px; height: 192px; border: 1px solid #828790; background: #fff; }
.listbox table { flex: 1; border-collapse: collapse; table-layout: fixed; }
.listbox th, .listbox td { height: 26px; padding: 0 6px; text-align: left; font-weight: 400; line-height: 18px; border-bottom: 1px solid #ececec; border-right: 1px solid #ececec; }
.listbox th { height: 33px; padding: 0 8px 6px; }
.listbox th:first-child { width: 172px; }
.listbox td { font-size: 12px; }
.listbox td + td, .listbox .add td { color: #757575; }
.listbox .add td { font-size: 13px; border-bottom: 0; }
.scroll { display: flex; flex-direction: column; align-items: center; justify-content: space-between; width: 20px; padding: 8px 0; background: #f0f0f0; }
.scroll svg { width: 10px; height: 7px; }
.scroll i { width: 19px; height: 63px; margin: 91px 0 6px; background: #cdcdcd; }
.side { display: flex; flex-direction: column; gap: 9px; padding-top: 1px; }
.side .btn { width: 128px; display: flex; align-items: center; justify-content: center; }
.side i { margin-left: 12px; border: 4px solid transparent; border-left: 5px solid #000; border-right: 0; }
.side .btn:disabled { background: #ccc; border-color: #bfbfbf; color: #838383; }
.side .btn:disabled i { border-left-color: #fff; }
.side .hot { background: #e5f1fb; border-color: #0078d7; }
.side .clear { margin-top: 29px; }
.dlg-foot { display: flex; justify-content: flex-end; gap: 9px; margin-right: 1px; }

.sheets { display: flex; height: 29px; flex: none; background: #e6e6e6; border-top: 1px solid #c8c8c8; position: relative; color: #555; }
.sheets button { display: flex; align-items: center; gap: 5px; padding: 6px 8px 0 7px; border-right: 1px solid #c8c8c8; white-space: nowrap; }
.sheets .src { width: 150px; padding-left: 0; gap: 0; }
.sheets .cut { width: 12px; height: 12px; }
.sheets .on { background: #fafafa; padding-right: 9px; }
.sheets .new { width: 32px; padding-left: 8px; }
.sheets .new svg { width: 16px; height: 16px; }
.mark { position: absolute; right: 9px; bottom: 9px; color: #fff; font-size: 15px; text-shadow: 0 0 2px #bbb; }

.notes { position: absolute; inset: 0; overflow: hidden; pointer-events: none; color: #ed1c24; font-size: 38px; line-height: 48px; }
.notes p { position: absolute; white-space: nowrap; font-family: "Noto Sans CJK SC", sans-serif; }
.notes svg { position: absolute; left: 0; top: 0; }
.n1 { left: 937px; top: 230px; }
.n2 { left: 1229px; top: 445px; }
.n3 { left: 1243px; top: 577px; }
.n4 { left: 1360px; top: 760px; }
.n5 { left: 1337px; top: 882px; }
```
